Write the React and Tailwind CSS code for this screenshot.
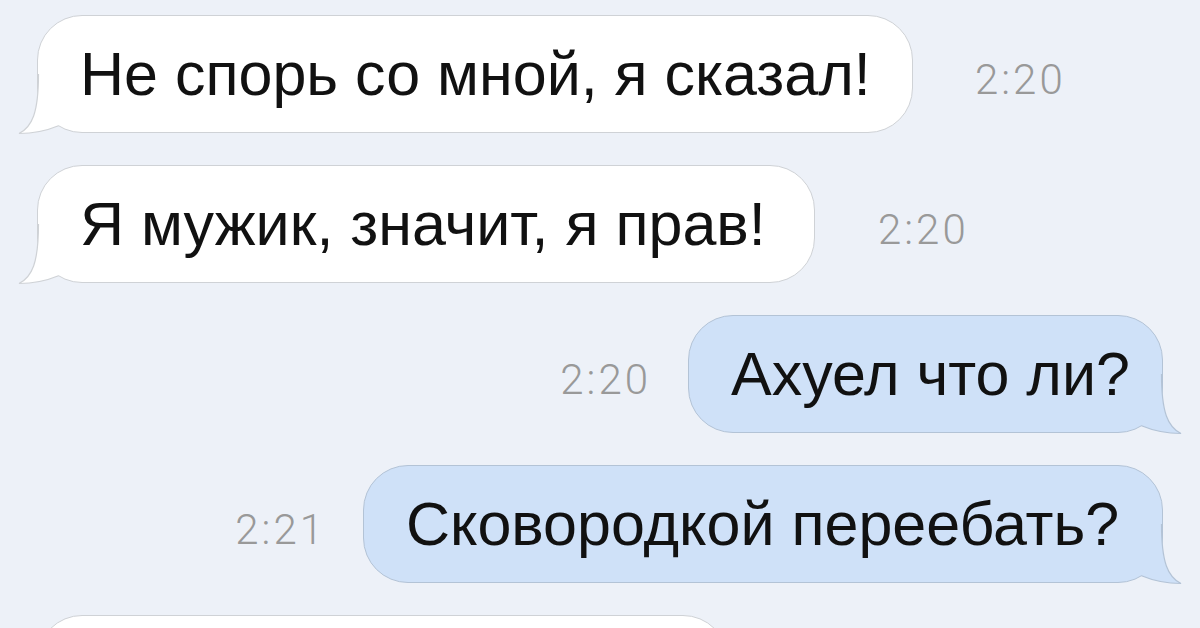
import React from "react";

function Tail({ side, fill, stroke }) {
  const pos = side === "left" ? "left-[-20px]" : "right-[-20px] -scale-x-100";
  return (
    <svg
      className={`absolute top-0 ${pos} overflow-visible`}
      width="100"
      height="118"
      viewBox="-20 0 100 118"
    >
      <path
        d="M0.5 60 C0.5 97 -6 111 -19 117.5 C-7 117.5 8 115 20.5 109.8 L14 80 L6 60 Z"
        fill={fill}
      />
      <path
        d="M0.5 58 C0.5 97 -6 111 -19 117.5 C-7 117.5 8 115 20.5 109.8"
        fill="none"
        stroke={stroke}
        strokeWidth="1.2"
      />
    </svg>
  );
}

function Bubble({ text, width, side }) {
  const isLeft = side === "left";
  const colors = isLeft
    ? "bg-white border-[#cfd2d6]"
    : "bg-[#cfe1f8] border-[#b3c3d6]";
  return (
    <div
      className={`relative h-[118px] shrink-0 rounded-[45px] border ${colors} flex items-center px-[42px]`}
      style={{ width }}
    >
      <Tail
        side={side}
        fill={isLeft ? "#ffffff" : "#cfe1f8"}
        stroke={isLeft ? "#cfd2d6" : "#b3c3d6"}
      />
      <span className="relative whitespace-nowrap text-[61px] leading-none text-[#111111] font-['Liberation_Sans',Arial,sans-serif]">
        {text}
      </span>
    </div>
  );
}

function Time({ children, className = "" }) {
  return (
    <span
      className={`mt-3 text-[42px] leading-none font-light tracking-[3px] text-[#999999] font-['Roboto','Liberation_Sans',sans-serif] ${className}`}
    >
      {children}
    </span>
  );
}

export default function App() {
  return (
    <div className="w-[1200px] h-[628px] overflow-hidden bg-[#edf1f8] pt-[15px] flex flex-col gap-[32px]">
      <div className="flex items-center pl-[37px]">
        <Bubble side="left" width={876} text="Не спорь со мной, я сказал!" />
        <Time className="ml-[62px]">2:20</Time>
      </div>
      <div className="flex items-center pl-[37px]">
        <Bubble side="left" width={778} text="Я мужик, значит, я прав!" />
        <Time className="ml-[63px]">2:20</Time>
      </div>
      <div className="flex items-center justify-end pr-[37px]">
        <Time className="mr-[37px]">2:20</Time>
        <Bubble side="right" width={475} text="Ахуел что ли?" />
      </div>
      <div className="flex items-center justify-end pr-[37px]">
        <Time className="mr-[37px]">2:21</Time>
        <Bubble side="right" width={800} text="Сковородкой переебать?" />
      </div>
      <div className="flex items-center pl-[37px]">
        <div className="h-[118px] w-[691px] shrink-0 rounded-[45px] border border-[#cfd2d6] bg-white" />
      </div>
    </div>
  );
}
